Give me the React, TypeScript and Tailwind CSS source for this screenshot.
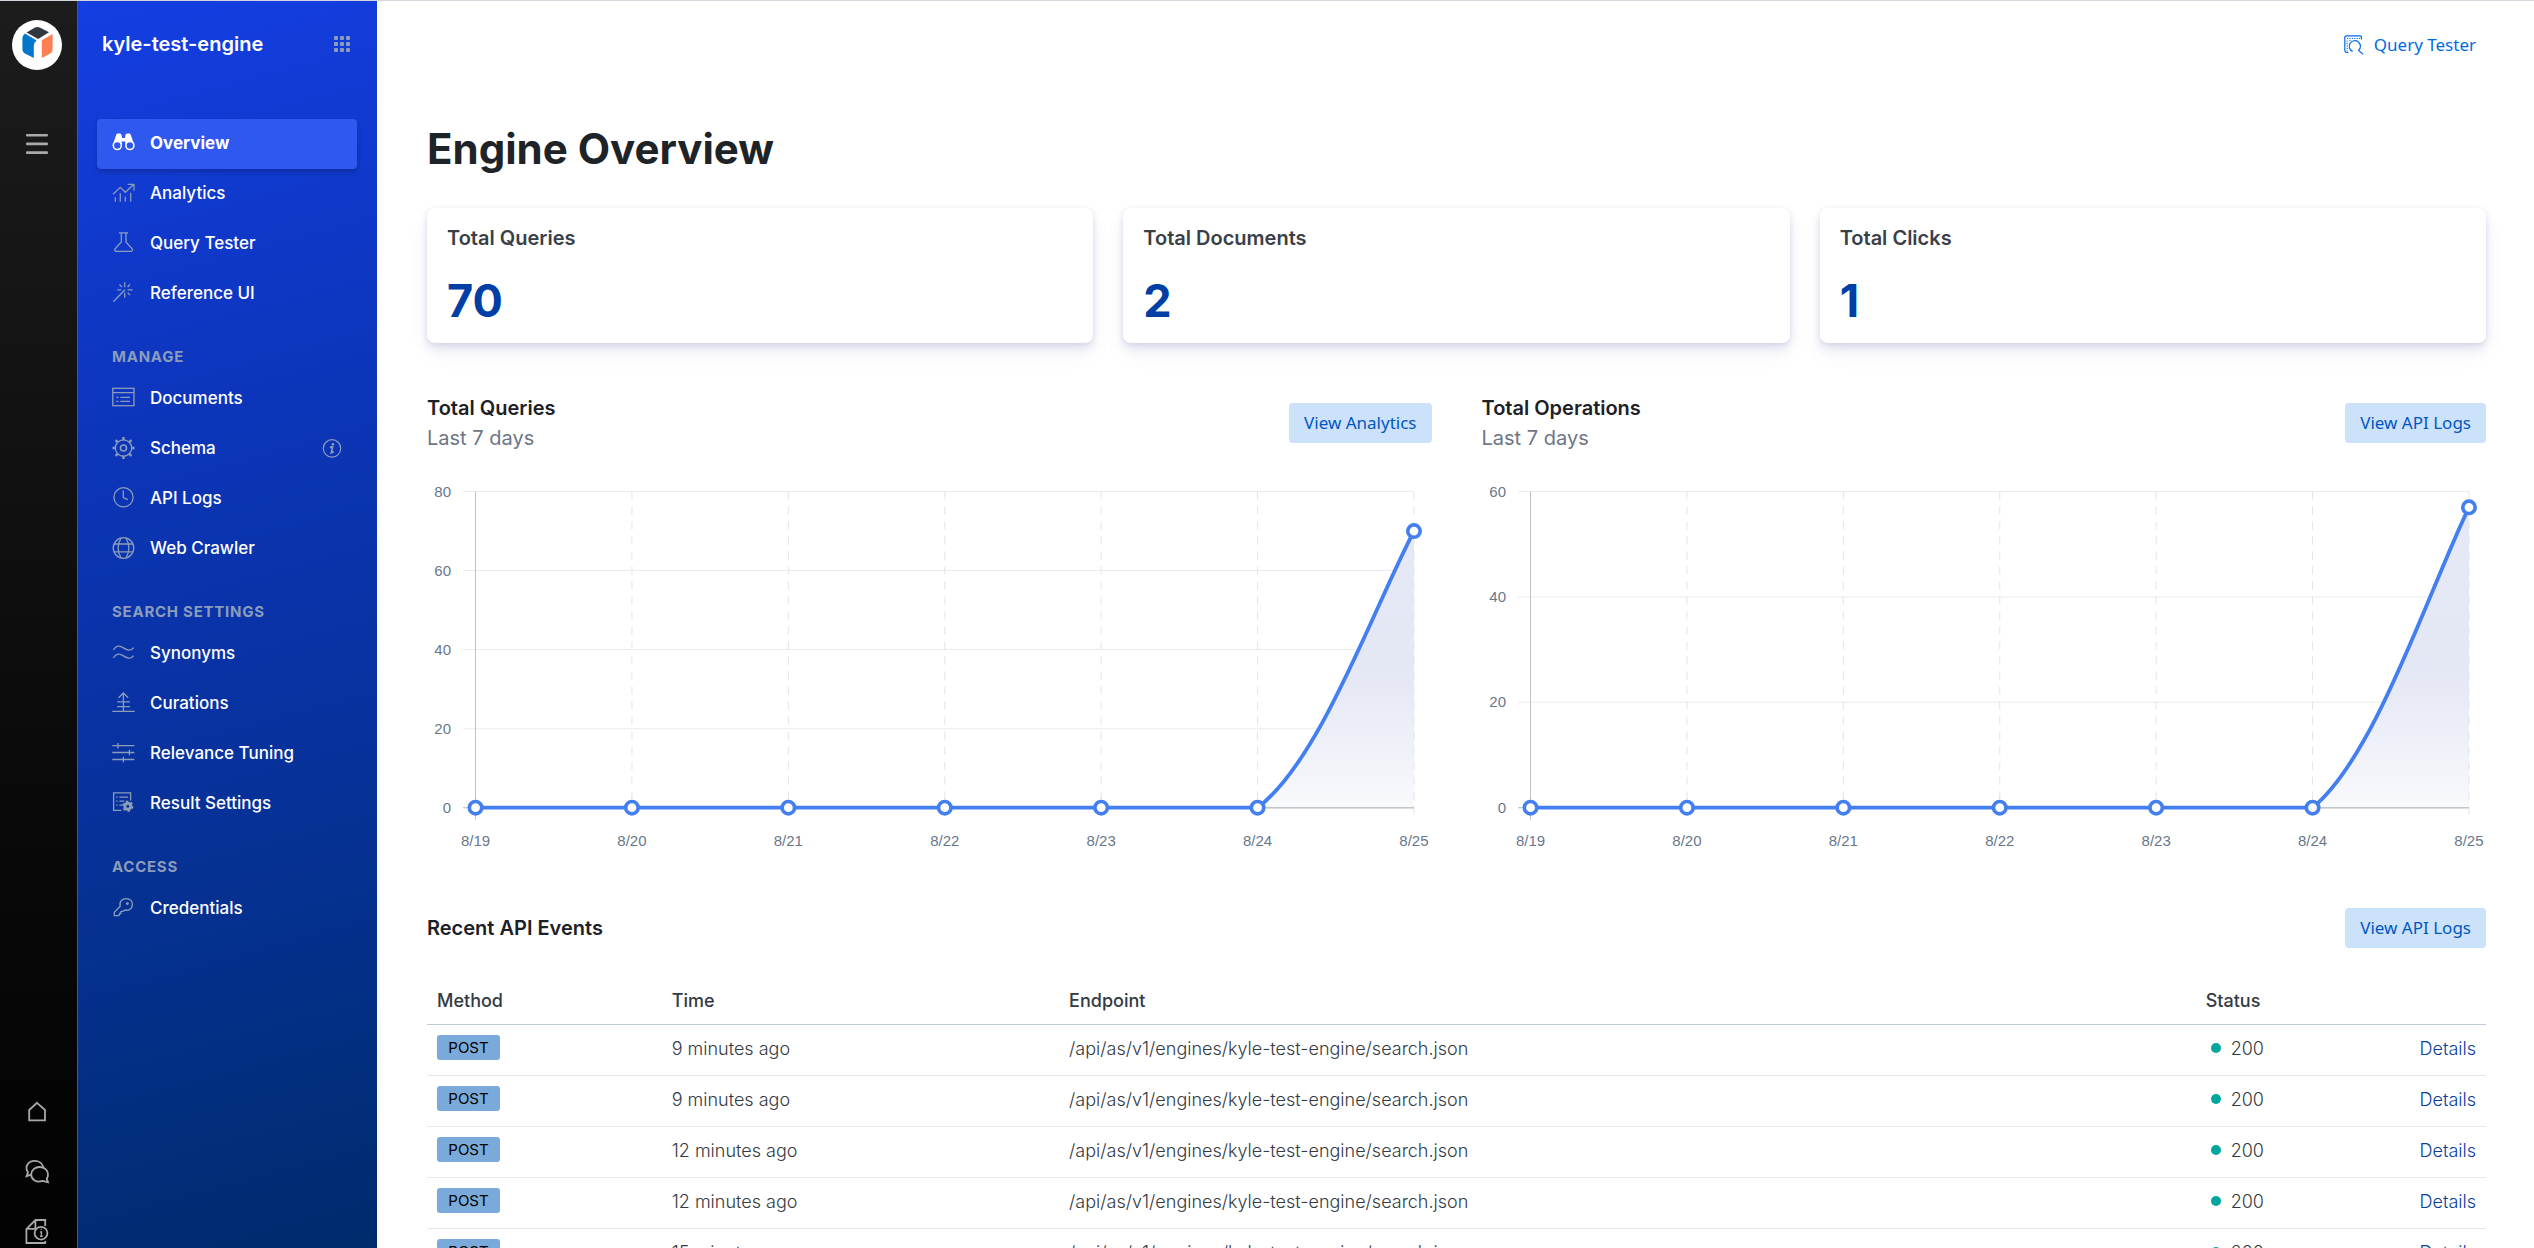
import type { ReactNode } from "react";
import clsx from "clsx";

type NavItem = {
  label: string;
  icon: ReactNode;
  active?: boolean;
  info?: boolean;
};

type NavSection = {
  title?: string;
  items: NavItem[];
};

const NAV: NavSection[] = [
  {
    items: [
      { label: "Overview", icon: <BinocularsIcon />, active: true },
      { label: "Analytics", icon: <AnalyticsIcon /> },
      { label: "Query Tester", icon: <FlaskIcon /> },
      { label: "Reference UI", icon: <WandIcon /> },
    ],
  },
  {
    title: "Manage",
    items: [
      { label: "Documents", icon: <DocumentsIcon /> },
      { label: "Schema", icon: <GearIcon />, info: true },
      { label: "API Logs", icon: <ClockIcon /> },
      { label: "Web Crawler", icon: <GlobeIcon /> },
    ],
  },
  {
    title: "Search Settings",
    items: [
      { label: "Synonyms", icon: <WavesIcon /> },
      { label: "Curations", icon: <CurationsIcon /> },
      { label: "Relevance Tuning", icon: <SlidersIcon /> },
      { label: "Result Settings", icon: <ResultSettingsIcon /> },
    ],
  },
  {
    title: "Access",
    items: [{ label: "Credentials", icon: <KeyIcon /> }],
  },
];

const STATS = [
  { label: "Total Queries", value: 70 },
  { label: "Total Documents", value: 2 },
  { label: "Total Clicks", value: 1 },
];

const DAYS = ["8/19", "8/20", "8/21", "8/22", "8/23", "8/24", "8/25"];

const EVENTS = [
  { id: 1, time: "9 minutes ago" },
  { id: 2, time: "9 minutes ago" },
  { id: 3, time: "12 minutes ago" },
  { id: 4, time: "12 minutes ago" },
  { id: 5, time: "15 minutes ago" },
];

function NavIcon({ children }: { children: ReactNode }) {
  return (
    <svg
      viewBox="0 0 24 24"
      className="size-6 shrink-0"
      fill="none"
      stroke="currentColor"
      strokeWidth="1.3"
      aria-hidden="true"
    >
      {children}
    </svg>
  );
}

function BinocularsIcon() {
  return (
    <NavIcon>
      <path
        d="M4 3.4C4.4 1.6 5.6 1.5 7 1.6C8.6 1.6 9.6 2.2 9.8 4L10 6H13L13.2 4C13.4 2.2 14.4 1.6 16 1.6C17.4 1.5 18.6 1.6 19 3.4L21.6 11L17 9L13.4 12.4V9.6H9.6V12.4L6 9L1.4 11Z"
        fill="currentColor"
        stroke="none"
      />
      <circle cx="5.3" cy="13.5" r="4" strokeWidth="1.6" className="fill-[#2f58ee]" />
      <circle cx="17.9" cy="13.5" r="4" strokeWidth="1.6" className="fill-[#2f58ee]" />
    </NavIcon>
  );
}

function AnalyticsIcon() {
  return (
    <NavIcon>
      <path d="M1 12.3L8.3 5.3L13.3 10.3L21.6 2.6M15.7 2.3H22V8.7" />
      <path d="M3.3 15.3V19.7M8.3 11.3V19.7M13.3 14.7V19.7M18.7 10.7V19.7" />
    </NavIcon>
  );
}

function FlaskIcon() {
  return (
    <NavIcon>
      <path d="M7 .8H16M9.3 .8V10L2.9 17C2.3 18.4 3 19.4 4.2 19.4H19C20.2 19.4 21 18.4 20.3 17L14 10V.8" />
    </NavIcon>
  );
}

function WandIcon() {
  return (
    <NavIcon>
      <path d="M1.3 19.7L13 7.8M12.7 .3V5.3M12.7 10.7V15.7M15.7 7.8H20.5M5.2 7.8H9.3M18 2.4L15.6 5M7.4 2.4L10 5M15.6 10.6L18 13.1" />
    </NavIcon>
  );
}

function DocumentsIcon() {
  return (
    <NavIcon>
      <rect x=".8" y="1.3" width="21.2" height="17.4" />
      <path d="M.8 5.7H22M8.3 10.4H18M8.3 14.4H18M4.3 10.4H6.3M4.3 14.4H6.3" />
    </NavIcon>
  );
}

function GearIcon() {
  return (
    <NavIcon>
      <circle cx="11.5" cy="11" r="8.2" />
      <circle cx="11.5" cy="11" r="3" strokeWidth="1.6" />
      <path
        d="M11.5 0V3.2M11.5 18.8V22M.5 11H3.7M19.3 11H22.5M3.6 3.1L6 5.5M17 16.5L19.4 18.9M19.4 3.1L17 5.5M6 16.5L3.6 18.9"
        strokeWidth="2.4"
      />
    </NavIcon>
  );
}

function ClockIcon() {
  return (
    <NavIcon>
      <circle cx="11.5" cy="10.3" r="9.6" />
      <path d="M11.3 3.5V10.5L15.8 12.6" />
    </NavIcon>
  );
}

function GlobeIcon() {
  return (
    <NavIcon>
      <circle cx="11.5" cy="11" r="10.3" />
      <path d="M2 7H21M2 14.8H21M9 1.2C5.4 7.2 5.4 14.6 9 20.8M14 1.2C17.6 7.2 17.6 14.6 14 20.8" />
    </NavIcon>
  );
}

function WavesIcon() {
  return (
    <NavIcon>
      <path d="M1.3 8C3.4 4.6 6.4 2.9 10 5.1C14.4 7.7 18.4 10.3 21.6 5.6M1.3 16C3.4 12.6 6.4 10.9 10 13.1C14.4 15.7 18.4 18.3 21.6 13.6" />
    </NavIcon>
  );
}

function CurationsIcon() {
  return (
    <NavIcon>
      <path d="M11.4 1V19.4M6.6 5.8L11.4 1L16.2 5.8M5.2 9.8H18M5.2 14.6H18M.3 19.4H22.7" />
    </NavIcon>
  );
}

function SlidersIcon() {
  return (
    <NavIcon>
      <path d="M.3 3.6H22.4M.3 10.5H22.4M.3 17.5H22.4M6 .9V6.4M17.4 7.8V13.3M11.4 14.7V20.2" />
    </NavIcon>
  );
}

function ResultSettingsIcon() {
  return (
    <NavIcon>
      <path d="M18.6 8.4V.8H1.6V18.4H9.6M7.4 5.2H16M7.4 9.2H12.4M7.4 13.2H10M4.2 5.2H5.6M4.2 9.2H5.6M4.2 13.2H5.6" />
      <circle cx="15.8" cy="14.2" r="3" strokeWidth="3" />
      <circle cx="15.8" cy="14.2" r="4.8" strokeWidth="1.6" strokeDasharray="2.5 2.5" />
    </NavIcon>
  );
}

function KeyIcon() {
  return (
    <NavIcon>
      <path d="M8.2 9.2C7 4.4 10.2 1.6 14.2 1.6C18.4 1.6 20.6 4.4 20.4 7.6C20.2 11.6 16.6 14 12.8 13L11.2 14.4H9V16.4H7.6V17.8L6.6 18.6H2.3V15.2Z" />
      <circle cx="15.4" cy="6.6" r=".8" fill="currentColor" />
    </NavIcon>
  );
}

function InfoIcon() {
  return (
    <svg viewBox="0 0 20 20" className="size-5" aria-hidden="true">
      <circle cx="10" cy="9.4" r="8.7" fill="none" stroke="currentColor" strokeWidth="1.2" />
      <circle cx="10.9" cy="5.2" r="1.3" fill="currentColor" />
      <path d="M7.8 8.4L10.6 7.9L9.3 13.8L11.9 12.8" fill="none" stroke="currentColor" strokeWidth="1.7" />
    </svg>
  );
}

function AppGridIcon() {
  return (
    <svg viewBox="0 0 16 16" className="size-4" fill="currentColor" aria-hidden="true">
      {[0, 6, 12].map((y) =>
        [0, 6, 12].map((x) => (
          <rect key={`${x}-${y}`} x={x} y={y} width="4" height="4" rx="1" />
        )),
      )}
    </svg>
  );
}

function Logo() {
  return (
    <svg viewBox="0 0 50 50" className="size-[50px]" aria-hidden="true">
      <circle cx="25" cy="25" r="25" fill="#fff" />
      <path d="M14.6 12.6L23 7.6Q25.4 6.2 27.8 7.6L37 12.3L26.2 19Z" fill="#343741" />
      <path d="M13 13.6L24.6 20.4Q21.8 22.4 21.8 26V38L13.4 33.8Q10.4 32.2 10.4 29V18.4Q10.4 15.6 13 13.6Z" fill="#0077cc" />
      <path d="M29.8 20.2L40.6 14V29.2Q40.6 32 38.2 33.6L29.8 38Z" fill="#ff7e52" />
    </svg>
  );
}

function RailIcon({ children }: { children: ReactNode }) {
  return (
    <svg
      viewBox="0 0 26 26"
      className="size-[26px]"
      fill="none"
      stroke="currentColor"
      strokeWidth="1.8"
      aria-hidden="true"
    >
      {children}
    </svg>
  );
}

function Rail() {
  return (
    <div className="flex w-[77px] shrink-0 flex-col items-center bg-linear-to-b from-[#1c1c1c] to-[#030303] pt-[19px] pr-[3px] text-[#a9a9a9]">
      <a href="#home" aria-label="Enterprise Search">
        <Logo />
      </a>
      <button type="button" aria-label="Toggle menu" className="mt-[63px]">
        <svg viewBox="0 0 22 22" className="size-[22px]" fill="currentColor" aria-hidden="true">
          <rect y="1" width="22" height="2.4" rx="1" />
          <rect y="9.4" width="22" height="2.8" rx="1" />
          <rect y="18.2" width="22" height="2.8" rx="1" />
        </svg>
      </button>
      <div className="mt-auto -mb-[14px] flex flex-col">
        <button type="button" aria-label="Home" className="flex h-[60px] items-center">
          <RailIcon>
            <path d="M13 3.8L21 11V21.4H5.2V11Z" />
          </RailIcon>
        </button>
        <button type="button" aria-label="Community" className="flex h-[60px] items-center">
          <RailIcon>
            <path d="M7.6 15.4L2.6 17.2L4 13.4C0 7.6 4.4 1.9 10.6 1.9C15 1.9 18.6 4.6 19.4 8.4" />
            <path d="M22.8 19.6L24 23.2L18.4 21.9C11.8 24.2 7.2 20 7.2 15.4C7.2 11.2 11 8 15.6 8C20.4 8 24 11.4 24 15.4C24 17 23.6 18.4 22.8 19.6Z" />
          </RailIcon>
        </button>
        <button type="button" aria-label="Documentation" className="flex h-[60px] items-center">
          <RailIcon>
            <path d="M21.2 7V1H11.4L2.4 10V24H21.2V22M11.4 1V9.8H2.4" />
            <circle cx="17" cy="14.2" r="6.4" />
            <path d="M16 13H17.4V17.4M16 17.4H18.8M16.6 10.4H17.8" strokeWidth="1.4" />
          </RailIcon>
        </button>
      </div>
    </div>
  );
}

function Sidebar() {
  return (
    <div className="w-[300px] shrink-0 border-l border-[#2a55e0] bg-[linear-gradient(165deg,#143ee2_0%,#0d35bb_33%,#04308c_75%,#002b6c_100%)] pr-5 pl-[19px] text-[#8b9dba]">
      <div className="flex h-[86px] items-center justify-between pr-[7px] pl-[5px]">
        <span className="text-xl font-semibold text-white">kyle-test-engine</span>
        <button type="button" aria-label="All engines">
          <AppGridIcon />
        </button>
      </div>
      <nav className="mt-8">
        {NAV.map((section, i) => (
          <div key={i}>
            {section.title && (
              <h2 className="mt-[22px] flex h-[33px] items-center pl-[15px] text-[15px] font-bold tracking-wider uppercase">
                {section.title}
              </h2>
            )}
            {section.items.map((item) => (
              <a
                key={item.label}
                href="#nav"
                className={clsx(
                  "flex h-[50px] items-center gap-[14px] rounded px-[15px]",
                  item.active && "bg-[#2f58ee] text-white shadow-[0_3px_5px_rgba(0,0,0,0.2)]",
                )}
              >
                {item.icon}
                <span
                  className={clsx(
                    "grow text-[17px] text-white",
                    item.active ? "font-bold" : "font-medium",
                  )}
                >
                  {item.label}
                </span>
                {item.info && <InfoIcon />}
              </a>
            ))}
          </div>
        ))}
      </nav>
    </div>
  );
}

function SoftButton({ children }: { children: ReactNode }) {
  return (
    <button
      type="button"
      className="h-10 rounded bg-[#cce1fa] px-[15px] font-['Noto_Sans',sans-serif] text-[17px] text-[#0057c0]"
    >
      {children}
    </button>
  );
}

const LEFT = 48.5;
const RIGHT = 986.5;
const TOP = 38.5;
const BOTTOM = 354.5;

function AreaChart({
  id,
  title,
  values,
  max,
}: {
  id: string;
  title: string;
  values: number[];
  max: number;
}) {
  const step = (RIGHT - LEFT) / (values.length - 1);
  const x = (i: number) => LEFT + i * step;
  const y = (v: number) => BOTTOM - (v / max) * (BOTTOM - TOP);
  const ticks = Array.from({ length: max / 20 + 1 }, (_, i) => i * 20);

  const curve = values
    .map((v, i) => {
      if (i === 0) return `M${x(0)} ${y(v)}`;
      const prev = values[i - 1];
      const from = x(i - 1);
      const rise = y(v) - y(prev);
      return `C${from + step * 0.4} ${y(prev) + rise * 0.17} ${from + step * 0.74} ${y(prev) + rise * 0.72} ${x(i)} ${y(v)}`;
    })
    .join("");

  return (
    <svg
      viewBox="0 0 1004 405"
      className="w-full font-['Liberation_Sans',Arial,sans-serif] text-[15px]"
      role="img"
      aria-label={title}
    >
      <defs>
        <linearGradient id={id} gradientUnits="userSpaceOnUse" x1="0" x2="0" y1={TOP} y2={BOTTOM}>
          <stop offset="0" stopColor="#e6e8f5" />
          <stop offset="0.55" stopColor="#e4e7f4" />
          <stop offset="0.8" stopColor="#edf0f8" stopOpacity="0.95" />
          <stop offset="1" stopColor="#f8f9fc" stopOpacity="0.9" />
        </linearGradient>
      </defs>
      {ticks.map((t) => (
        <g key={t}>
          <line
            x1="36"
            x2={RIGHT}
            y1={y(t)}
            y2={y(t)}
            stroke={t === 0 ? "#b8b8b8" : "#e8ecf1"}
          />
          <text x="24" y={y(t) + 5} textAnchor="end" fill="#69778c">
            {t}
          </text>
        </g>
      ))}
      <path d={`${curve}V${BOTTOM}H${LEFT}Z`} fill={`url(#${id})`} />
      {DAYS.map((day, i) => (
        <g key={day}>
          <line
            x1={x(i)}
            x2={x(i)}
            y1={TOP}
            y2={BOTTOM + (i === 0 ? 12 : 8)}
            stroke={i === 0 ? "#bfbfbf" : "#e4e4e4"}
            strokeDasharray={i === 0 ? undefined : "8 7"}
          />
          <text x={x(i)} y="393" textAnchor="middle" fill="#69778c">
            {day}
          </text>
        </g>
      ))}
      <line x1={LEFT} x2={RIGHT} y1={BOTTOM} y2={BOTTOM} stroke="#b8b8b8" />
      <path d={curve} fill="none" stroke="#437ff0" strokeWidth="3.8" />
      {values.map((v, i) => (
        <circle key={i} cx={x(i)} cy={y(v)} r="6.2" fill="#fff" stroke="#437ff0" strokeWidth="3.6" />
      ))}
    </svg>
  );
}

function ChartPanel({
  title,
  action,
  children,
}: {
  title: string;
  action: string;
  children: ReactNode;
}) {
  return (
    <section>
      <div className="flex items-center justify-between">
        <div className="text-xl leading-[30px]">
          <h2 className="font-semibold text-[#1d2126]">{title}</h2>
          <p className="text-[#6c7685]">Last 7 days</p>
        </div>
        <SoftButton>{action}</SoftButton>
      </div>
      {children}
    </section>
  );
}

function EventsTable() {
  return (
    <table className="mt-6 w-full table-fixed text-left text-lg leading-[27px] text-[#343a43]">
      <colgroup>
        <col className="w-[11.4%]" />
        <col className="w-[19.3%]" />
        <col className="w-[55.2%]" />
        <col />
        <col />
      </colgroup>
      <thead>
        <tr className="h-[52px] border-b border-[#bccbdd]">
          <th className="px-[10px] pt-[5px] font-medium">Method</th>
          <th className="px-[10px] pt-[5px] font-medium">Time</th>
          <th className="px-[10px] pt-[5px] font-medium">Endpoint</th>
          <th className="px-[10px] pt-[5px] font-medium">Status</th>
          <td />
        </tr>
      </thead>
      <tbody className="font-light">
        {EVENTS.map((event) => (
          <tr key={event.id} className="h-[51px] border-b border-[#e6e8ec] align-top">
            <td className="px-[10px] pt-[10px]">
              <span className="flex h-[25px] w-[63px] items-center justify-center rounded-[3px] bg-[#79aad9] text-[15px] font-normal text-black">
                POST
              </span>
            </td>
            <td className="px-[10px] pt-[10px]">{event.time}</td>
            <td className="px-[10px] pt-[10px]">/api/as/v1/engines/kyle-test-engine/search.json</td>
            <td className="px-[10px] pt-[10px]">
              <span className="flex items-center gap-[10px] pl-[5px]">
                <span className="size-[10px] rounded-full bg-[#00a69b]" />
                200
              </span>
            </td>
            <td className="px-[10px] pt-[10px] text-right">
              <a href="#details" className="text-[#07409f]">
                Details
              </a>
            </td>
          </tr>
        ))}
      </tbody>
    </table>
  );
}

export default function App() {
  return (
    <div className="flex h-screen overflow-hidden border-t border-[#d3d6df] bg-white font-['Inter',sans-serif]">
      <Rail />
      <Sidebar />
      <main className="min-w-0 grow pr-12 pl-[50px]">
        <div className="flex h-[88px] items-center justify-end pr-[10px]">
          <a
            href="#query-tester"
            className="flex items-center gap-[10px] font-['Noto_Sans',sans-serif] text-[17px] text-[#006be6]"
          >
            <svg viewBox="0 0 20 20" className="size-5" fill="none" stroke="currentColor" aria-hidden="true">
              <path d="M17.4 4.4V2.6Q17.4 .8 15.6 .8H2.6Q.8 .8 .8 2.6V15.6Q.8 17.4 2.6 17.4H4.4" strokeWidth="1.2" />
              <path d="M3 3.4H16" strokeDasharray="1.2 1.2" />
              <path d="M3.2 5.6V15.8" strokeDasharray="1.2 1.2" />
              <path d="M5.4 5.4H8" strokeDasharray="1.2 1.2" />
              <path d="M8.6 16.4A5.6 5.6 0 1 1 14.6 15.4L19.2 19.4" strokeWidth="1.2" />
            </svg>
            Query Tester
          </a>
        </div>
        <h1 className="mt-[30px] text-[42px] leading-[60px] font-bold text-[#1d2327]">
          Engine Overview
        </h1>
        <div className="mt-[29px] grid grid-cols-3 gap-[30px]">
          {STATS.map((stat) => (
            <div
              key={stat.label}
              className="h-[135px] rounded-lg px-5 pt-[15px] shadow-[0_1px_5px_rgba(90,100,160,0.12),0_6px_10px_rgba(80,90,160,0.13),0_12px_20px_rgba(90,100,170,0.06)]"
            >
              <p className="text-xl leading-[30px] font-semibold text-[#3a4048]">{stat.label}</p>
              <p className="mt-[18px] text-[45px] leading-[60px] font-bold text-[#0040a6]">
                {stat.value}
              </p>
            </div>
          ))}
        </div>
        <div className="mt-[50px] grid grid-cols-2 gap-[50px]">
          <ChartPanel title="Total Queries" action="View Analytics">
            <AreaChart
              id="queries-fill"
              title="Total queries per day"
              values={[0, 0, 0, 0, 0, 0, 70]}
              max={80}
            />
          </ChartPanel>
          <ChartPanel title="Total Operations" action="View API Logs">
            <AreaChart
              id="operations-fill"
              title="Total operations per day"
              values={[0, 0, 0, 0, 0, 0, 57]}
              max={60}
            />
          </ChartPanel>
        </div>
        <section className="mt-[50px]">
          <div className="flex items-center justify-between">
            <h2 className="text-xl leading-[30px] font-semibold text-[#1d2126]">
              Recent API Events
            </h2>
            <SoftButton>View API Logs</SoftButton>
          </div>
          <EventsTable />
        </section>
      </main>
    </div>
  );
}
